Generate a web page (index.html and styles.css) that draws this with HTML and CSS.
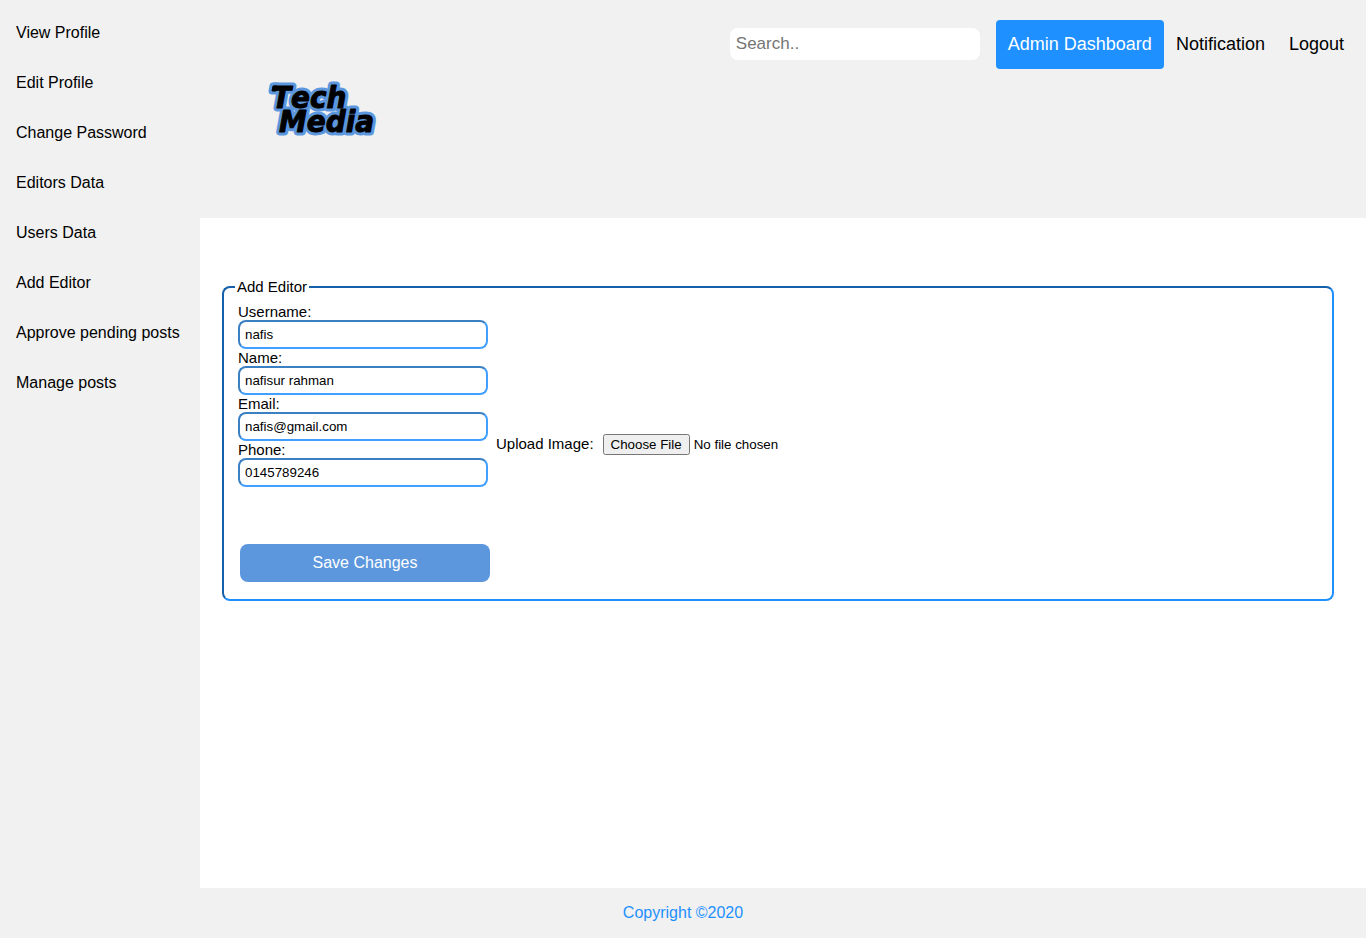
FILE: index.html
```html
<!DOCTYPE html>
<html lang="en">
<head>
<meta charset="utf-8">
<title>Add Editor</title>
<link rel="stylesheet" href="styles.css">
</head>
<body>
<div class="shell">
  <nav class="sidebar">
    <a href="#">View Profile</a>
    <a href="#">Edit Profile</a>
    <a href="#">Change Password</a>
    <a href="#">Editors Data</a>
    <a href="#">Users Data</a>
    <a href="#">Add Editor</a>
    <a href="#">Approve pending posts</a>
    <a href="#">Manage posts</a>
  </nav>
  <div class="page">
    <header class="header">
      <a class="logo" href="#">
        <svg width="120" height="70" viewBox="0 0 120 70" role="img" aria-label="Tech Media">
          <use class="logo-outline" href="#wordmark"/>
          <g class="logo-fill">
            <g id="wordmark">
              <text x="8" y="35">Tech</text>
              <text x="15" y="59">Media</text>
              <path d="M9 13h4l-1 5h-4z"/>
            </g>
          </g>
        </svg>
      </a>
      <div class="header-right">
        <input class="search" type="text" placeholder="Search.." aria-label="Search">
        <a class="top-link active" href="#">Admin Dashboard</a>
        <a class="top-link" href="#">Notification</a>
        <a class="top-link" href="#">Logout</a>
      </div>
    </header>
    <main class="content">
      <form>
        <fieldset class="panel">
          <legend>Add Editor</legend>
          <div class="columns">
            <div class="fields">
              <label for="username">Username:</label>
              <input id="username" type="text" value="nafis">
              <label for="name">Name:</label>
              <input id="name" type="text" value="nafisur rahman">
              <label for="email">Email:</label>
              <input id="email" type="text" value="nafis@gmail.com">
              <label for="phone">Phone:</label>
              <input id="phone" type="text" value="0145789246">
            </div>
            <div class="upload">
              <label for="image">Upload Image:</label>
              <input id="image" type="file">
            </div>
          </div>
          <button class="save" type="submit">Save Changes</button>
        </fieldset>
      </form>
    </main>
  </div>
</div>
<footer class="footer">Copyright ©2020</footer>
</body>
</html>
```
FILE: styles.css
```css
* { box-sizing: border-box; }

body {
  margin: 0;
  min-height: 100vh;
  display: flex;
  flex-direction: column;
  font-family: "Liberation Sans", Arial, sans-serif;
  color: #000;
  background: #fff;
}

a { color: inherit; text-decoration: none; }

.shell {
  flex: 1;
  display: grid;
  grid-template-columns: 200px 1fr;
}

.sidebar {
  display: flex;
  flex-direction: column;
  padding-top: 8px;
  background: #f1f1f1;
}

.sidebar a {
  padding: 16px;
  font-size: 16px;
  line-height: 18px;
}

.header {
  display: flex;
  justify-content: space-between;
  align-items: flex-start;
  min-height: 218px;
  padding: 20px 10px 20px 64px;
  background: #f1f1f1;
}

.logo { padding-top: 53px; }
.logo svg { display: block; }

.logo text {
  font-family: "DejaVu Sans Condensed", Roboto, sans-serif;
  font-size: 31px;
  font-weight: 700;
  font-style: italic;
  font-kerning: none;
}

.logo-fill {
  fill: #000;
  stroke: #000;
  stroke-width: 1px;
  stroke-linejoin: round;
}

.logo-outline {
  fill: #5c97de;
  stroke: #5c97de;
  stroke-width: 7px;
  stroke-linejoin: round;
}

.header-right { display: flex; }

.search {
  width: 250px;
  height: 32px;
  margin: 8px 16px 0 0;
  padding: 6px;
  border: none;
  border-radius: 8px;
  background: #fff;
  font-family: inherit;
  font-size: 17px;
}

.top-link {
  padding: 12px;
  border-radius: 4px;
  font-size: 18px;
  line-height: 24px;
  height: 49px;
}

.top-link.active { background: #1e90ff; color: #fff; }

.content { padding: 60px 32px 20px 22px; }

.panel {
  margin: 0;
  padding: 8px 14px 17px;
  border: 2px inset #1e90ff;
  border-radius: 8px;
  font-size: 15px;
  line-height: 17px;
}

.panel legend { margin-left: -3px; padding: 0 2px; }

.columns { display: flex; gap: 8px; }

.fields {
  display: flex;
  flex-direction: column;
  width: 250px;
}

.fields input {
  height: 29px;
  padding: 1px 5px;
  border: 2px solid;
  border-color: #3a80c2 #409fff #409fff #3a80c2;
  border-radius: 8px;
  background: #fff;
}

.upload {
  display: flex;
  align-items: baseline;
  gap: 9px;
  padding-top: 131px;
}

.save {
  display: block;
  width: 250px;
  height: 38px;
  margin: 57px 0 0 2px;
  border: none;
  border-radius: 8px;
  background: #5c97de;
  color: #fff;
  font-family: inherit;
  font-size: 16px;
}

.footer {
  padding: 16px;
  background: #f1f1f1;
  color: #1e90ff;
  font-size: 16px;
  line-height: 18px;
  text-align: center;
}
```
